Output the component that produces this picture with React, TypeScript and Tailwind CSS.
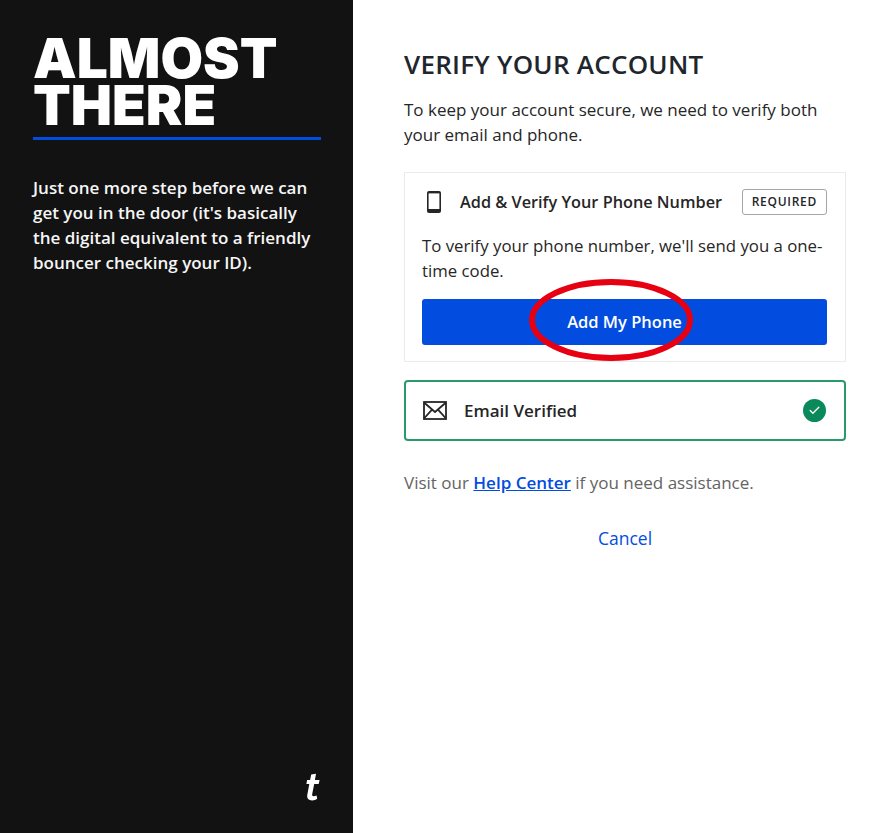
import { Check } from "lucide-react";

const body = "font-['Open_Sans','Liberation_Sans',sans-serif]";

function PhoneIcon() {
  return (
    <svg width="16" height="24" viewBox="0 0 16 24" aria-hidden>
      <rect x="1" y="1" width="14" height="22" rx="2" fill="#262626" />
      <rect x="2.6" y="3.4" width="10.8" height="15.6" fill="#fff" />
    </svg>
  );
}

function MailIcon() {
  return (
    <svg width="24" height="19" viewBox="0 0 24 19" fill="none" stroke="#262626" strokeWidth="1.8" aria-hidden>
      <rect x="1" y="1" width="22" height="17" />
      <path d="M1 1.5 12 11 23 1.5M1 17.5 9 8.6M23 17.5 15 8.6" />
    </svg>
  );
}

function Logo() {
  return (
    <svg width="16" height="30" viewBox="0 0 16 28" fill="#fff" aria-hidden>
      <path d="M6.2 1.5 11 .8 9.9 7h4.7l-.9 4H9.2l-2 10c-.3 1.6.3 2.2 1.5 2.2.9 0 1.9-.3 2.9-.8l.6 3.4c-1.5 1-3.2 1.6-5 1.6-3.6 0-5.6-2-4.9-5.6L4.3 11H1.4l.7-4h3z" />
    </svg>
  );
}

export default function App() {
  return (
    <div className={`flex h-[833px] w-[896px] bg-white ${body}`}>
      <aside className="flex w-[353px] shrink-0 flex-col bg-[#121212] pl-[33px] pr-[32px] pt-[35px] pb-[31px] text-white">
        <h1 className="border-b-[3px] border-[#024ddf] pb-[8px] font-['Inter',sans-serif] text-[55px] leading-[47px] font-black">
          ALMOST
          <br />
          THERE
        </h1>
        <p className="mt-[35px] text-[17px] leading-[25px] font-semibold text-[#f6f6f6]">
          Just one more step before we can get you in the door (it's basically the digital equivalent to a friendly
          bouncer checking your ID).
        </p>
        <div className="mt-auto flex justify-end">
          <Logo />
        </div>
      </aside>

      <main className="flex-1 pt-[47px] pl-[51px] pr-[50px]">
        <h2 className="text-[26px] leading-[34px] font-semibold tracking-[0.25px] text-[#1f262d]">VERIFY YOUR ACCOUNT</h2>
        <p className="mt-[16px] text-[17px] leading-[25px] text-[#262626]">
          To keep your account secure, we need to verify both your email and phone.
        </p>

        <section className="relative mt-[25px] border border-[#ebebeb] pl-[17px] pr-[18px] pt-[15px] pb-[16px]">
          <div className="flex items-center">
            <span className="ml-[4px] flex w-[16px]">
              <PhoneIcon />
            </span>
            <span className="ml-[18px] text-[16.3px] leading-[28px] font-semibold text-[#262626]">
              Add &amp; Verify Your Phone Number
            </span>
            <span className="ml-auto rounded-[3px] border border-[#a6a6a6] px-[9px] text-[12px] leading-[24px] font-semibold tracking-[0.06em] text-[#262626]">
              REQUIRED
            </span>
          </div>
          <p className="mt-[17px] text-[16.8px] leading-[25px] text-[#262626]">
            To verify your phone number, we'll send you a one-time code.
          </p>
          <button className="mt-[16px] h-[46px] w-full rounded-[3px] bg-[#024ddf] text-[16.5px] font-semibold text-white">
            Add My Phone
          </button>
          <svg
            className="absolute left-[123px] top-[105px]"
            width="166"
            height="84"
            viewBox="0 0 166 84"
            fill="none"
            aria-hidden
          >
            <ellipse cx="83" cy="42" rx="79" ry="38" stroke="#e60012" strokeWidth="6" />
          </svg>
        </section>

        <section className="mt-[18px] flex h-[61px] items-center rounded-[4px] border-2 border-[#2a9a6c] pl-[17px] pr-[18px]">
          <MailIcon />
          <span className="ml-[17px] text-[17px] font-semibold text-[#262626]">Email Verified</span>
          <span className="ml-auto flex h-[23px] w-[23px] items-center justify-center rounded-full bg-[#0a8a5a]">
            <Check size={13} color="#fff" strokeWidth={2.5} />
          </span>
        </section>

        <p className="mt-[29px] text-[17px] leading-[25px] text-[#646464]">
          Visit our{" "}
          <a href="#" className="font-semibold text-[#024ddf] underline">
            Help Center
          </a>{" "}
          if you need assistance.
        </p>
        <p className="mt-[31px] text-center text-[17.5px] leading-[25px] font-medium text-[#024ddf]">Cancel</p>
      </main>
    </div>
  );
}
